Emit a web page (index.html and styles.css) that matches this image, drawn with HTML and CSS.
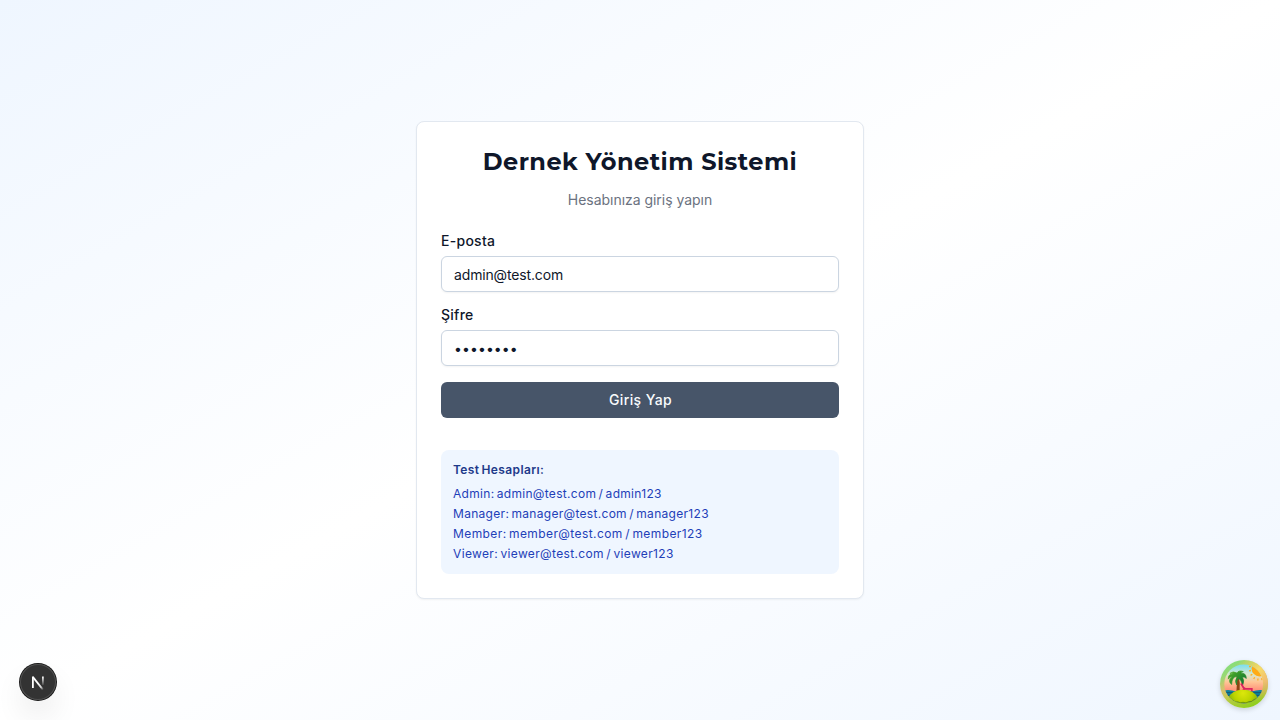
FILE: index.html
```html
<!DOCTYPE html>
<html lang="tr">
<head>
<meta charset="utf-8">
<title>Dernek Yönetim Sistemi</title>
<link rel="stylesheet" href="styles.css">
</head>
<body>
<main class="page">
  <section class="card">
    <header class="card-header">
      <h1 class="title">Dernek Yönetim Sistemi</h1>
      <p class="subtitle">Hesabınıza giriş yapın</p>
    </header>
    <form class="form">
      <div class="field">
        <label class="label" for="email">E-posta</label>
        <input class="input input-email" id="email" type="email" value="admin@test.com">
      </div>
      <div class="field">
        <label class="label" for="password">Şifre</label>
        <input class="input input-password" id="password" type="password" value="admin123">
      </div>
      <button class="submit" type="button">Giriş Yap</button>
    </form>
    <div class="accounts">
      <p class="accounts-title">Test Hesapları:</p>
      <ul class="accounts-list">
        <li>Admin: admin@test.com / admin123</li>
        <li>Manager: manager@test.com / manager123</li>
        <li class="member">Member: member@test.com / member123</li>
        <li class="viewer">Viewer: viewer@test.com / viewer123</li>
      </ul>
    </div>
  </section>
</main>
<div class="dev-badge">
  <svg width="36" height="36" viewBox="0 0 36 36" fill="none">
    <defs>
      <linearGradient id="diag" x1="18" y1="19" x2="23" y2="26" gradientUnits="userSpaceOnUse"><stop stop-color="#fff"/><stop offset=".6" stop-color="#fff" stop-opacity=".8"/><stop offset="1" stop-color="#fff" stop-opacity="0"/></linearGradient>
      <linearGradient id="stem" x1="0" y1="13" x2="0" y2="22" gradientUnits="userSpaceOnUse"><stop stop-color="#fff"/><stop offset="1" stop-color="#fff" stop-opacity="0"/></linearGradient>
    </defs>
    <path d="M12.9 13L23.2 26" stroke="url(#diag)" stroke-width="2"/>
    <path d="M12.9 24V12.4" stroke="#fff" stroke-width="1.8"/>
    <path d="M22.9 12.4V21" stroke="url(#stem)" stroke-width="1.7"/>
  </svg>
</div>
<div class="island-badge">
  <svg width="48" height="48" viewBox="0 0 48 48">
    <defs>
      <linearGradient id="rim" x1="10" y1="2" x2="34" y2="46" gradientUnits="userSpaceOnUse"><stop stop-color="#82df7c"/><stop offset=".2" stop-color="#9bd873"/><stop offset=".42" stop-color="#d0bd72"/><stop offset=".65" stop-color="#b5cb42"/><stop offset="1" stop-color="#8fce1c"/></linearGradient>
      <linearGradient id="rimright" x1="20" y1="0" x2="48" y2="25" gradientUnits="userSpaceOnUse"><stop stop-color="#fccf55" stop-opacity="0"/><stop offset=".55" stop-color="#f6dc67"/><stop offset="1" stop-color="#f0b077"/></linearGradient>
      <linearGradient id="rimfade" x1="0" y1="20" x2="0" y2="41" gradientUnits="userSpaceOnUse"><stop stop-color="#fff"/><stop offset="1" stop-color="#000"/></linearGradient>
      <mask id="upper"><path fill="url(#rimfade)" d="M0 0h48v48H0z"/></mask>
      <linearGradient id="sky" x1="0" y1="5" x2="0" y2="31" gradientUnits="userSpaceOnUse"><stop stop-color="#7edfef"/><stop offset=".35" stop-color="#d6e8cf"/><stop offset=".65" stop-color="#ffc695"/><stop offset="1" stop-color="#ff8d78"/></linearGradient>
      <linearGradient id="palm" x1="10" y1="11" x2="23" y2="26" gradientUnits="userSpaceOnUse"><stop stop-color="#52ad24"/><stop offset="1" stop-color="#087234"/></linearGradient>
      <radialGradient id="hill" cx="23" cy="33" r="15" gradientUnits="userSpaceOnUse"><stop stop-color="#dde70b"/><stop offset=".6" stop-color="#bcd400"/><stop offset="1" stop-color="#86b60a"/></radialGradient>
      <clipPath id="scene"><circle cx="23.7" cy="24" r="19.4"/></clipPath>
    </defs>
    <circle cx="24" cy="24" r="24" fill="url(#rim)"/>
    <circle cx="24" cy="24" r="24" fill="url(#rimright)" mask="url(#upper)"/>
    <g clip-path="url(#scene)">
      <path fill="url(#sky)" d="M4 4h40v40H4z"/>
      <circle cx="39.5" cy="8.5" r="7.9" fill="#ffab16"/>
      <path d="M31 6.5h-2M31 10.5l-2 .4M32.3 14.2l-1.7 1.2M34.7 17.2l-1 1.8M38 18.5l-.2 2M41.5 18.3l.6 1.8" stroke="#ffaf22" stroke-width="1.3"/>
      <path fill="#0c839d" d="M4 30.5q4-1 8 0t8 0 8 0 8 0 8 0v14H4z"/>
      <path d="M4 32.7h11M31 32.7h12M5 35.3h9M33 35.3h10" fill="none" stroke="#17516d" stroke-width="1"/>
      <path fill="#8b4513" d="M16.5 16l2.3-.3q1.6 7.3.8 15.3h-3.1q.8-8 0-15z"/>
      <path fill="url(#palm)" stroke="url(#palm)" stroke-width=".7" d="M17 16.5q-5.2 0-5.4 8-4.3-3.8.5-8.1-2.3.2-3.8 2.7-.5-5.3 5.2-5.1-1.4-1.2-3.6-.6 3.2-2.8 6.9-.4 2-3.1 6.5-1.4-2 .4-2.4 1.6 5.2-.5 5.4 5.2-1.8-1.8-4.1-1.4 2.6 3.4.5 8-1.7-5.8-4.2-6.6-2.2 2-1.9 6.4-2.5-3.8.9-8.3z"/>
      <path fill="none" stroke="#dc245f" stroke-width="1.8" d="M21 23.5l3.2 5.3h7.6v2.7M25.5 28l-3 3"/>
      <path fill="url(#hill)" d="M8 38.5Q11.5 29.7 23 29.7t15 8.8Q34 43.5 23 43.5T8 38.5z"/>
      <path d="M9.5 38.5l2 2 2 .1 1.5 1.5 3-.2 2 1 3-.6 3 .6 3-1.3 3-.2 1.5-1.7 2.5-.8" fill="none" stroke="#5b8417" stroke-width=".8"/>
    </g>
  </svg>
</div>
</body>
</html>
```
FILE: styles.css
```css
* { box-sizing: border-box; }
body { margin: 0; font-family: Inter, "Liberation Sans", sans-serif; color: #0f172a; }
h1, p, ul { margin: 0; padding: 0; }
.page {
  min-height: 100vh;
  display: flex;
  align-items: center;
  justify-content: center;
  background: linear-gradient(to bottom right, #eff6ff, #ffffff, #eff6ff);
}
.card {
  width: 448px;
  padding: 24px;
  background: #fff;
  border: 1px solid #e2e8f0;
  border-radius: 8px;
  box-shadow: 0 1px 2px rgb(0 0 0 / 5%);
}
.card-header { display: grid; gap: 12px; text-align: center; }
.title { font: 700 24px/32px Montserrat, Inter, sans-serif; letter-spacing: .46px; white-space: nowrap; }
.subtitle { font-size: 14px; line-height: 20px; letter-spacing: -.03px; color: #6b7280; }
.form { display: grid; gap: 16px; margin-top: 24px; }
.field { display: grid; gap: 8px; }
.label { font-size: 14px; line-height: 14px; font-weight: 500; letter-spacing: .27px; }
.input {
  width: 100%; height: 36px; padding: 4px 12px;
  border: 1px solid #cbd5e1; border-radius: 6px; background: #fff;
  box-shadow: 0 1px 2px rgb(0 0 0 / 5%);
  font: 400 14px/20px Inter, sans-serif; color: #0f172a; outline: none;
}
.input-email { letter-spacing: -.15px; }
.input-password { letter-spacing: .1px; }
.submit {
  height: 36px; padding: 0 6px 0 7px; border: 0; border-radius: 6px;
  background: #475569; color: #f8fafc;
  font: 500 14px/20px Inter, sans-serif; letter-spacing: .38px;
}
.accounts { margin-top: 32px; padding: 12px; border-radius: 8px; background: #eff6ff; font-size: 12px; line-height: 16px; letter-spacing: .3px; word-spacing: -1.3px; }
.accounts-title { font-weight: 600; letter-spacing: .38px; color: #1e3a8a; }
.accounts-list { display: grid; gap: 4px; margin-top: 8px; list-style: none; color: #1e40b8; }
.member { letter-spacing: .41px; }
.viewer { letter-spacing: .35px; }
.dev-badge {
  position: fixed; left: 20px; bottom: 20px; width: 36px; height: 36px;
  display: grid; place-items: center; border-radius: 50%;
  background: #333;
  box-shadow: 0 0 0 1px #171717, inset 0 0 0 1px #505050, 0 16px 32px -8px rgb(0 0 0 / 24%);
}
.island-badge {
  position: fixed; right: 12px; bottom: 12px; width: 48px; height: 48px; border-radius: 50%;
  box-shadow: 0 2px 5px rgb(0 0 0 / 15%);
}
.island-badge svg { display: block; }
```
